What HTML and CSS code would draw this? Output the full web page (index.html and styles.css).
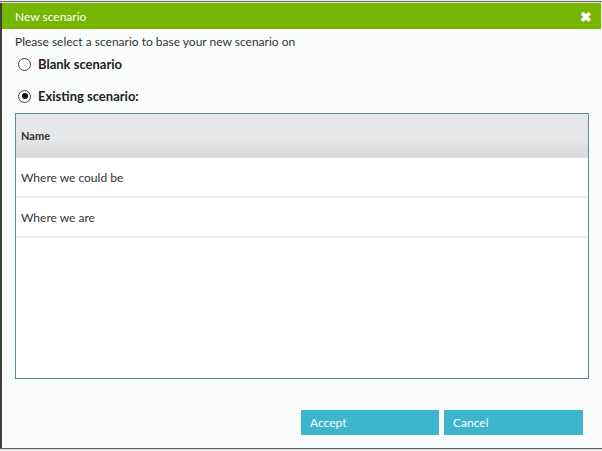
FILE: index.html
```html
<!DOCTYPE html>
<html>
<head>
<meta charset="utf-8">
<link rel="stylesheet" href="styles.css">
</head>
<body>
<div class="window">
  <div class="edge-top"></div>
  <div class="dialog">
    <div class="titlebar">
      <span class="title">New scenario</span>
      <span class="close">✖</span>
    </div>
    <div class="content">
      <p class="intro">Please select a scenario to base your new scenario on</p>
      <label class="option"><span class="radio"></span>Blank scenario</label>
      <label class="option existing"><span class="radio checked"></span>Existing scenario:</label>
      <div class="grid">
        <div class="grid-head">Name</div>
        <div class="grid-row">Where we could be</div>
        <div class="grid-row">Where we are</div>
      </div>
      <div class="actions">
        <button class="btn">Accept</button>
        <button class="btn">Cancel</button>
      </div>
    </div>
  </div>
  <div class="edge-bottom"></div>
</div>
</body>
</html>
```
FILE: styles.css
```css
html, body {
  margin: 0;
  padding: 0;
  background: #fbfcfc;
}
.window {
  width: 602px;
  height: 451px;
  display: flex;
  flex-direction: column;
  font-family: "Lato", "Noto Sans", sans-serif;
  color: #333;
  overflow: hidden;
}
.edge-top {
  height: 3px;
  background: #e4e4e4;
  border-top: 1px solid #eeeeee;
  box-sizing: border-box;
  box-shadow: inset 0 1px 0 #6a6a6a;
}
.dialog {
  flex: 1;
  display: flex;
  flex-direction: column;
  border-left: 2px solid #3f3f3f;
  margin-right: 1px;
  background: #fbfcfc;
}
.titlebar {
  height: 26px;
  background: #76b600;
  display: flex;
  align-items: center;
  justify-content: space-between;
  padding: 0 9px 0 13px;
  color: #fff;
}
.title {
  font-size: 12px;
}
.close {
  font-size: 14px;
  font-weight: bold;
}
.content {
  flex: 1;
  display: flex;
  flex-direction: column;
  padding: 0 12px 0 13px;
}
.intro {
  margin: 5px 0 0;
  font-size: 12px;
}
.option {
  display: flex;
  align-items: center;
  font-size: 13px;
  font-weight: bold;
  color: #222;
  margin-top: 7px;
}
.option.existing {
  margin-top: 16px;
}
.radio {
  width: 11px;
  height: 11px;
  border: 1px solid #444;
  border-radius: 50%;
  background: #fff;
  margin: 0 7px 0 3px;
  display: flex;
  align-items: center;
  justify-content: center;
}
.radio.checked::after {
  content: "";
  width: 6px;
  height: 6px;
  border-radius: 50%;
  background: #111;
}
.grid {
  margin-top: 9px;
  height: 266px;
  border: 1px solid #5f8b9b;
  background: #fff;
  box-sizing: border-box;
}
.grid-head {
  height: 44px;
  background: linear-gradient(#e6e7e9 0%, #e6e7e9 55%, #d8d9db 100%);
  border-bottom: 1px solid #e3e3e3;
  display: flex;
  align-items: center;
  padding-left: 5px;
  font-size: 11px;
  font-weight: bold;
  color: #333;
  box-sizing: border-box;
}
.grid-row {
  height: 40px;
  border-bottom: 2px solid #eeeeee;
  display: flex;
  align-items: center;
  padding-left: 5px;
  font-size: 12px;
  color: #333;
  box-sizing: border-box;
}
.actions {
  display: flex;
  justify-content: flex-end;
  gap: 5px;
  margin-top: 31px;
  padding-right: 6px;
}
.btn {
  width: 138px;
  height: 25px;
  background: #3cb5cd;
  border: 0;
  color: #fff;
  text-align: left;
  padding: 0 9px;
  font-family: inherit;
  font-size: 12px;
}
.btn + .btn {
  width: 139px;
}
.edge-bottom {
  height: 3px;
  background: #dadada;
  border-top: 1px solid #5a5a5a;
  border-bottom: 1px solid #f0f0f0;
  box-sizing: border-box;
  margin-bottom: 0;
}
```
